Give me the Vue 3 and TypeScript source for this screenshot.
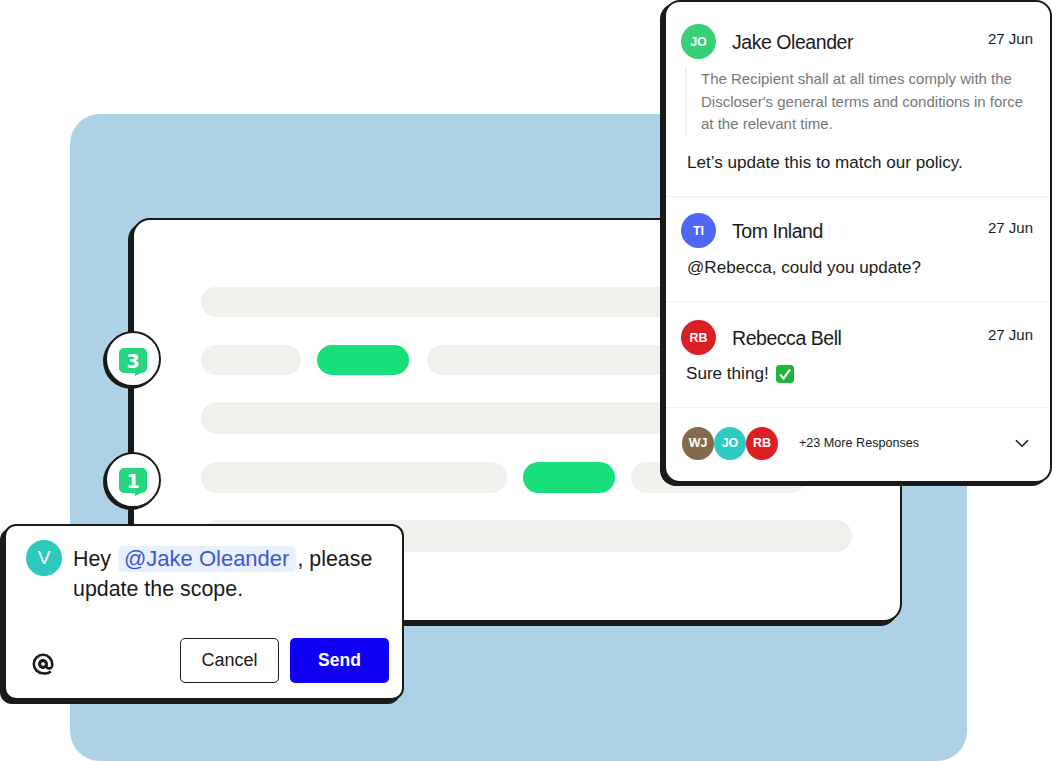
<script setup lang="ts">
interface Pill { width: number; green?: boolean; extraGap?: number }
interface Row { height: number; pills: Pill[] }
const rows: Row[] = [
  { height: 30, pills: [{ width: 560 }] },
  { height: 30, pills: [{ width: 100 }, { width: 92, green: true }, { width: 300, extraGap: 2 }] },
  { height: 32, pills: [{ width: 560 }] },
  { height: 31, pills: [{ width: 306 }, { width: 92, green: true }, { width: 175 }] },
  { height: 32, pills: [{ width: 651 }] },
]
</script>

<template>
  <div class="stage">
    <div class="panel"></div>

    <section class="doc">
      <div v-for="(row, i) in rows" :key="i" class="doc-row" :style="{ height: row.height + 'px' }">
        <span
          v-for="(pill, j) in row.pills"
          :key="j"
          class="pill"
          :class="{ green: pill.green }"
          :style="{ width: pill.width + 'px', marginLeft: (pill.extraGap ?? 0) + 'px' }"
        ></span>
      </div>
    </section>

    <div class="marker marker-3">
      <svg width="28" height="28" viewBox="0 0 28 28">
        <path d="M5 0h18a5 5 0 0 1 5 5v15a5 5 0 0 1-5 5h-1l-6 3v-3H5a5 5 0 0 1-5-5V5a5 5 0 0 1 5-5z" fill="#26d681" />
        <text x="14" y="19.500" text-anchor="middle" class="marker-num">3</text>
      </svg>
    </div>
    <div class="marker marker-1">
      <svg width="28" height="28" viewBox="0 0 28 28">
        <path d="M5 0h18a5 5 0 0 1 5 5v15a5 5 0 0 1-5 5h-1l-6 3v-3H5a5 5 0 0 1-5-5V5a5 5 0 0 1 5-5z" fill="#26d681" />
        <text x="14" y="19.500" text-anchor="middle" class="marker-num">1</text>
      </svg>
    </div>

    <section class="thread">
      <article class="entry entry-first">
        <header class="entry-head">
          <span class="avatar" style="background: #37cf78">JO</span>
          <span class="name">Jake Oleander</span>
          <time class="date">27 Jun</time>
        </header>
        <blockquote class="quote">
          The Recipient shall at all times comply with the<br />
          Discloser's general terms and conditions in force<br />
          at the relevant time.
        </blockquote>
        <p class="body">Let’s update this to match our policy.</p>
      </article>
      <article class="entry entry-second">
        <header class="entry-head">
          <span class="avatar" style="background: #4f67f5">TI</span>
          <span class="name">Tom Inland</span>
          <time class="date">27 Jun</time>
        </header>
        <p class="body">@Rebecca, could you update?</p>
      </article>
      <article class="entry entry-third">
        <header class="entry-head">
          <span class="avatar" style="background: #dc1f26">RB</span>
          <span class="name">Rebecca Bell</span>
          <time class="date">27 Jun</time>
        </header>
        <p class="body sure">
          Sure thing!
          <svg class="check" width="18" height="18" viewBox="0 0 18 18">
            <rect width="18" height="18" rx="3.5" fill="#1cb636" />
            <path d="M4 9.500l3.500 4L14 4.500" fill="none" stroke="#f4f4f4" stroke-width="2.200" />
          </svg>
        </p>
      </article>
      <footer class="more">
        <div class="stack">
          <span class="mini" style="background: #84694a">WJ</span>
          <span class="mini" style="background: #2fcac4">JO</span>
          <span class="mini" style="background: #dc1f26">RB</span>
        </div>
        <span class="more-text">+23 More Responses</span>
        <svg class="chevron" width="14" height="9" viewBox="0 0 14 9">
          <path d="M1 1.200l6 6 6-6" fill="none" stroke="#1a1a1a" stroke-width="1.600" />
        </svg>
      </footer>
    </section>

    <section class="composer">
      <div class="composer-text">
        <span class="avatar avatar-v">V</span>
        <p class="message">
          Hey <span class="mention">@Jake Oleander</span>, please<br />
          update the scope.
        </p>
      </div>
      <div class="composer-actions">
        <svg class="at" width="22" height="22" viewBox="0 0 24 24">
          <path
            d="M20.500 20.200A10.400 10.400 0 0 1 12 22 10 10 0 1 1 22 12v1.500a3.300 3.300 0 0 1-6.600 0V12a3.400 3.400 0 1 0-1 2.400"
            fill="none"
            stroke="#1a1a1a"
            stroke-width="2.800"
          />
          <circle cx="12" cy="12" r="4" fill="none" stroke="#1a1a1a" stroke-width="2.800" />
        </svg>
        <button class="btn cancel">Cancel</button>
        <button class="btn send">Send</button>
      </div>
    </section>
  </div>
</template>

<style>
html,
body {
  margin: 0;
  background: #fff;
}
</style>

<style scoped>
.stage {
  position: relative;
  width: 1052px;
  height: 761px;
  overflow: hidden;
  background: #fff;
  font-family: "Liberation Sans", Arial, sans-serif;
  color: #1a1a1a;
}
.panel {
  position: absolute;
  left: 70px;
  top: 114px;
  width: 897px;
  height: 647px;
  border-radius: 30px;
  background: #aed2e5;
}
.doc {
  position: absolute;
  left: 132px;
  top: 218px;
  width: 770px;
  height: 404px;
  box-sizing: border-box;
  padding: 67px 0 0 67px;
  display: flex;
  flex-direction: column;
  gap: 27.500px;
  background: #fff;
  border: 2px solid #1a1a1a;
  border-radius: 18px;
  box-shadow: -4px 4px 0 #1a1a1a;
}
.doc-row {
  display: flex;
  gap: 16px;
}
.pill {
  display: block;
  height: 100%;
  border-radius: 16px;
  background: #f0f0ec;
}
.pill.green {
  background: #19df7b;
}
.marker {
  position: absolute;
  left: 105px;
  width: 56px;
  height: 56px;
  box-sizing: border-box;
  display: flex;
  align-items: center;
  justify-content: center;
  background: #fff;
  border: 2px solid #1a1a1a;
  border-radius: 50%;
  box-shadow: -2px 2px 0 #1a1a1a;
}
.marker-3 {
  top: 331px;
}
.marker-3 svg {
  transform: translate(0, 3px);
}
.marker-1 {
  top: 452px;
}
.marker-1 svg {
  transform: translate(0, 2px);
}
.marker-num {
  font: 700 19px "DejaVu Sans", sans-serif;
  fill: #fff;
}
.thread {
  position: absolute;
  left: 664px;
  top: 0;
  width: 388px;
  height: 483px;
  box-sizing: border-box;
  display: flex;
  flex-direction: column;
  background: #fff;
  border: 2px solid #1a1a1a;
  border-radius: 16px;
  box-shadow: -4px 3px 0 #1a1a1a;
}
.entry {
  box-sizing: border-box;
  padding: 0 17px 0 15px;
  border-bottom: 1px solid #efefef;
}
.entry-first {
  height: 195px;
  padding-top: 22px;
}
.entry-second {
  height: 105px;
  padding-top: 16px;
}
.entry-third {
  height: 106px;
  padding-top: 18px;
}
.entry-head {
  display: flex;
  align-items: center;
}
.avatar {
  flex: none;
  width: 35px;
  height: 35px;
  display: flex;
  align-items: center;
  justify-content: center;
  border-radius: 50%;
  color: #fff;
  font-size: 12.500px;
  font-weight: 700;
}
.name {
  margin-left: 16px;
  font-size: 19.500px;
  line-height: 24px;
  letter-spacing: -0.45px;
  transform: translateY(-0.5px);
}
.date {
  margin-left: auto;
  font-size: 15px;
  line-height: 18px;
  align-self: flex-start;
  margin-top: 6px;
}
.quote {
  margin: 9px 0 0 4px;
  padding-left: 14px;
  border-left: 2px solid #efefef;
  font-size: 15px;
  line-height: 22.500px;
  color: #777;
  white-space: nowrap;
}
.body {
  margin: 0 0 0 6px;
  font-size: 17.100px;
  line-height: 24px;
}
.entry-first .body {
  margin-top: 15.500px;
}
.entry-second .body {
  margin-top: 8px;
}
.sure {
  margin-top: 7px;
  margin-left: 5px;
  display: flex;
  align-items: center;
  gap: 7px;
}
.more {
  flex: 1;
  display: flex;
  align-items: center;
  padding: 0 21px 3px 16px;
}
.stack {
  display: flex;
}
.mini {
  width: 32px;
  height: 33px;
  display: flex;
  align-items: center;
  justify-content: center;
  border-radius: 50%;
  color: #fff;
  font-size: 12.500px;
  font-weight: 700;
}
.more-text {
  margin-left: 21px;
  font-size: 12.600px;
}
.chevron {
  margin-left: auto;
}
.composer {
  position: absolute;
  left: 4px;
  top: 524px;
  width: 400px;
  height: 176px;
  box-sizing: border-box;
  display: flex;
  flex-direction: column;
  justify-content: space-between;
  padding: 14px 13px 15px 20px;
  background: #fff;
  border: 2px solid #1a1a1a;
  border-radius: 12px;
  box-shadow: -4px 4px 0 #1a1a1a;
}
.composer-text {
  display: flex;
  gap: 11px;
}
.avatar-v {
  width: 36px;
  height: 36px;
  background: #2dc9bd;
  font-size: 19px;
  font-weight: 400;
}
.message {
  margin: 4px 0 0;
  font-size: 21.400px;
  line-height: 30px;
  white-space: nowrap;
}
.mention {
  display: inline-block;
  margin: 0 1px 0 1px;
  padding: 0 7px 0 6px;
  font-size: 22px;
  line-height: 26px;
  border-radius: 5px;
  background: #e9f0fd;
  color: #3a57d4;
}
.composer-actions {
  display: flex;
  align-items: center;
  gap: 11px;
}
.at {
  margin: 6px auto 0 6px;
}
.btn {
  width: 99px;
  height: 45px;
  box-sizing: border-box;
  border-radius: 5px;
  font: 400 18px "Liberation Sans", Arial, sans-serif;
}
.cancel {
  background: #fff;
  border: 1.500px solid #1a1a1a;
  color: #1a1a1a;
}
.send {
  background: #0f00f5;
  border: 0;
  color: #fff;
  font-weight: 700;
  font-size: 17.500px;
}
</style>
